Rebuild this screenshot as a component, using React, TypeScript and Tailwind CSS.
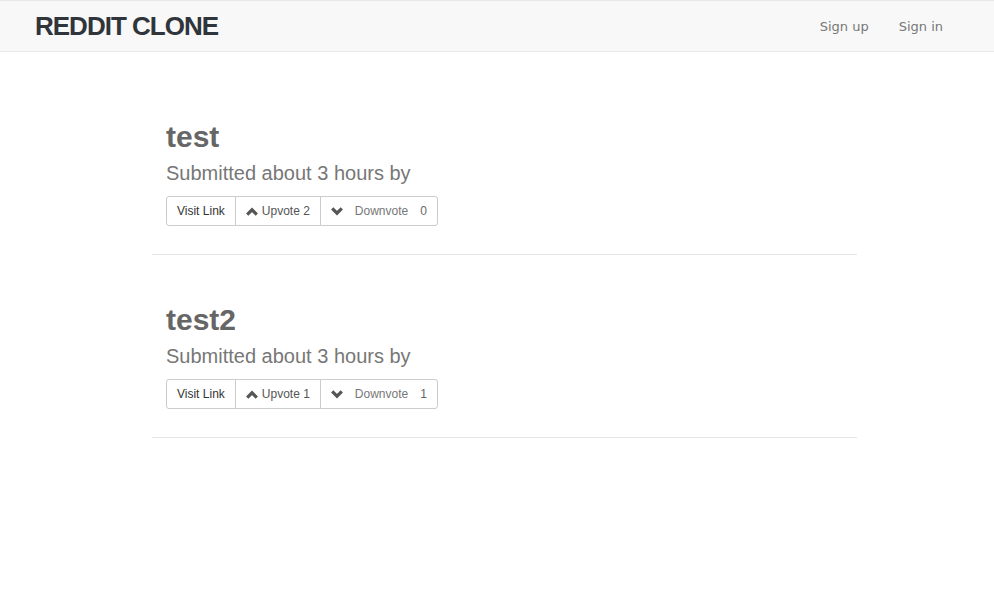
import React from 'react'

type Post = { title: string; up: number; down: number }

const posts: Post[] = [
  { title: 'test', up: 2, down: 0 },
  { title: 'test2', up: 1, down: 1 },
]

function Chevron({ dir }: { dir: 'up' | 'down' }) {
  return (
    <svg width="12" height="9" viewBox="0 0 12 9" className="shrink-0">
      {dir === 'up' ? (
        <path d="M1.2 7.6 L6 2.8 L10.8 7.6" fill="none" stroke="currentColor" strokeWidth={3.2} strokeLinejoin="miter" />
      ) : (
        <path d="M1.2 1.4 L6 6.2 L10.8 1.4" fill="none" stroke="currentColor" strokeWidth={3.2} strokeLinejoin="miter" />
      )}
    </svg>
  )
}

function PostItem({ post }: { post: Post }) {
  return (
    <div>
      <div className="px-[14px]">
        <h2 className="text-[30px] leading-[33px] font-bold text-[#666]">{post.title}</h2>
        <h4 className="mt-[9px] text-[20px] leading-[22px] text-[#777]">Submitted about 3 hours by</h4>
        <div className="mt-[12px] inline-flex h-[30px] border border-[#ccc] rounded-[3px] text-[12px] bg-white">
          <button className="px-[10px] text-[#333] flex items-center">Visit Link</button>
          <button className="px-[10px] border-l border-[#ccc] text-[#555] flex items-center gap-[4px]">
            <Chevron dir="up" />
            <span>Upvote {post.up}</span>
          </button>
          <button className="px-[10px] border-l border-[#ccc] text-[#777] flex items-center">
            <span className="text-[#555]"><Chevron dir="down" /></span>
            <span className="ml-[12px]">Downvote</span>
            <span className="ml-[12px] text-[#666]">{post.down}</span>
          </button>
        </div>
      </div>
      <div className="mt-[28px] h-px bg-[#e6e6e6]" />
    </div>
  )
}

export default function App() {
  return (
    <div className="min-h-[602px] bg-white font-['Liberation_Sans',Arial,sans-serif]">
      <nav className="h-[52px] bg-[#f8f8f8] border-y border-[#e7e7e7] flex items-center justify-between">
        <a className="ml-[35px] text-[26px] font-bold tracking-[-1px] text-[#2f353b] leading-none pb-[1px]">REDDIT CLONE</a>
        <div className="flex mr-[36px] pt-[2px] font-['DejaVu_Sans',Verdana,sans-serif] text-[13px] text-[#777]">
          <a className="px-[15px]">Sign up</a>
          <a className="px-[15px]">Sign in</a>
        </div>
      </nav>
      <main className="ml-[152px] w-[705px]">
        <div className="pt-[68px] flex flex-col gap-[48px]">
          {posts.map(p => (
            <PostItem key={p.title} post={p} />
          ))}
        </div>
      </main>
    </div>
  )
}
